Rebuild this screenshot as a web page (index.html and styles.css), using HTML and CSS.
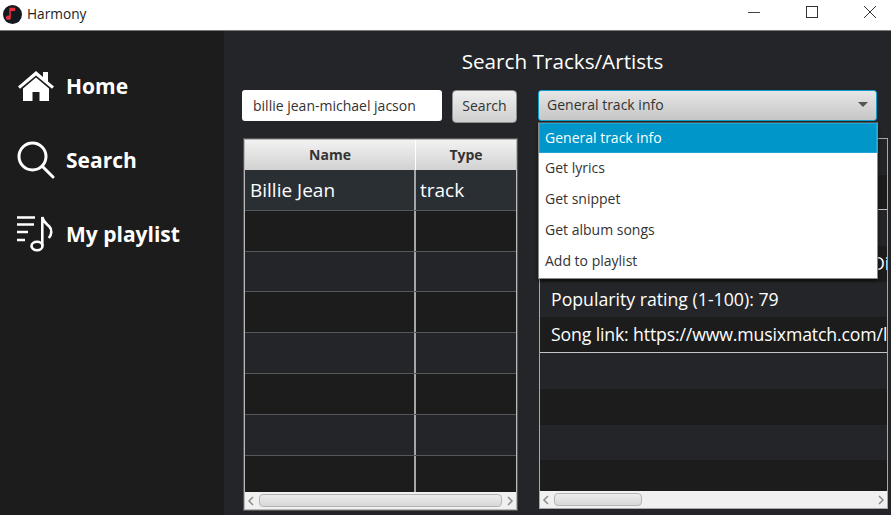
FILE: index.html
```html
<!DOCTYPE html>
<html lang="en">
<head>
  <meta charset="UTF-8">
  <meta name="viewport" content="width=device-width, initial-scale=1.0">
  <title>Harmony</title>
  <link rel="stylesheet" href="styles.css">
</head>
<body>

  <div class="titlebar">
    <svg class="app-icon" viewBox="0 0 20 20" width="19" height="19">
      <circle cx="10" cy="10" r="10" fill="#14181f"/>
      <path d="M8.200 4v9.200a2.600 2.200 0 1 1-1.600-1.800V3h6.200v3.200H8.200z" fill="#e8303f"/>
    </svg>
    <span class="app-name">Harmony</span>
    <div class="win-buttons">
      <svg viewBox="0 0 14 14" width="14" height="14"><path d="M1 7.500h12" stroke="#444" stroke-width="1" fill="none"/></svg>
      <svg viewBox="0 0 14 14" width="14" height="14"><rect x="1.500" y="1.500" width="11" height="11" stroke="#333" stroke-width="1" fill="none"/></svg>
      <svg viewBox="0 0 14 14" width="14" height="14"><path d="M1 1l12 12M13 1L1 13" stroke="#333" stroke-width="1" fill="none"/></svg>
    </div>
  </div>

  <div class="app">
    <div class="sidebar">
      <div class="nav-item">
        <svg viewBox="0 0 38 32" width="38" height="32">
          <path d="M1 16.500L19 1l7 6V2h5v9.500l6 5-2 2.300L19 5.500 3 18.800z" fill="#fff"/>
          <path d="M6 18.500L19 7.500l13 11V31H22.500v-9h-7v9H6z" fill="#fff"/>
        </svg>
        <span>Home</span>
      </div>
      <div class="nav-item">
        <svg viewBox="0 0 38 38" width="38" height="38">
          <circle cx="15.500" cy="15.500" r="13.500" fill="none" stroke="#fff" stroke-width="3"/>
          <path d="M25.500 25.500L36 36" fill="none" stroke="#fff" stroke-width="3" stroke-linecap="round"/>
        </svg>
        <span>Search</span>
      </div>
      <div class="nav-item">
        <svg viewBox="0 0 38 36" width="38" height="36" fill="none" stroke="#fff" stroke-width="2.600">
          <path d="M0 1.500h18M0 8.500h17M0 16h11M0 24h8"/>
          <ellipse cx="20" cy="30" rx="5.500" ry="4.200"/>
          <path d="M25.300 30V1c1 5 4 6.500 7 9.500 3 3 2.500 8-.5 11.500"/>
        </svg>
        <span>My playlist</span>
      </div>
    </div>

    <div class="main">
      <h1 class="page-title">Search Tracks/Artists</h1>

      <div class="columns">
        <div class="col-left">
          <div class="search-row">
            <div class="search-input">billie jean-michael jacson</div>
            <button class="btn">Search</button>
          </div>

          <div class="table">
            <div class="table-head">
              <div class="cell-name">Name</div>
              <div class="cell-type">Type</div>
            </div>
            <div class="table-body">
              <div class="row selected"><div class="cell-name">Billie Jean</div><div class="cell-type">track</div></div>
              <div class="row"><div class="cell-name"></div><div class="cell-type"></div></div>
              <div class="row alt"><div class="cell-name"></div><div class="cell-type"></div></div>
              <div class="row"><div class="cell-name"></div><div class="cell-type"></div></div>
              <div class="row alt"><div class="cell-name"></div><div class="cell-type"></div></div>
              <div class="row"><div class="cell-name"></div><div class="cell-type"></div></div>
              <div class="row alt"><div class="cell-name"></div><div class="cell-type"></div></div>
              <div class="row last"><div class="cell-name"></div><div class="cell-type"></div></div>
            </div>
            <div class="scrollbar">
              <svg class="arrow" viewBox="0 0 8 10" width="8" height="10"><path d="M6 1L2 5l4 4"/></svg>
              <div class="thumb thumb-wide"></div>
              <svg class="arrow" viewBox="0 0 8 10" width="8" height="10"><path d="M2 1l4 4-4 4"/></svg>
            </div>
          </div>
        </div>

        <div class="col-right">
          <div class="select">
            <span>General track info</span>
            <span class="caret"></span>
          </div>

          <div class="select-menu">
            <div class="option active">General track info</div>
            <div class="option">Get lyrics</div>
            <div class="option">Get snippet</div>
            <div class="option">Get album songs</div>
            <div class="option">Add to playlist</div>
          </div>

          <div class="list">
            <div class="list-body">
              <div class="list-row alt"></div>
              <div class="list-row divided"></div>
              <div class="list-row alt"></div>
              <div class="list-row clipped">Di</div>
              <div class="list-row alt">Popularity rating (1-100): 79</div>
              <div class="list-row divided link">Song link: https://www.musixmatch.com/lyrics</div>
              <div class="list-row alt"></div>
              <div class="list-row"></div>
              <div class="list-row alt"></div>
              <div class="list-row"></div>
            </div>
            <div class="scrollbar">
              <svg class="arrow" viewBox="0 0 8 10" width="8" height="10"><path d="M6 1L2 5l4 4"/></svg>
              <div class="thumb thumb-short"></div>
              <svg class="arrow arrow-end" viewBox="0 0 8 10" width="8" height="10"><path d="M2 1l4 4-4 4"/></svg>
            </div>
          </div>
        </div>
      </div>
    </div>
  </div>

</body>
</html>
```

FILE: styles.css
```css
html, body {
  margin: 0;
  height: 100%;
  overflow: hidden;
}
body {
  font-family: "Open Sans", "Noto Sans", sans-serif;
  background-color: #242528;
  display: flex;
  flex-direction: column;
}

/* window title */
.titlebar {
  height: 31px;
  flex: none;
  background-color: #fff;
  border-bottom: 1px solid #7a7a7a;
  box-sizing: border-box;
  display: flex;
  align-items: center;
  padding: 0 0 6px 3px;
}
.app-icon {
  margin: 4px 5px 0 0;
}
.app-name {
  margin-top: 3px;
  font-size: 13.700px;
  color: #222;
}
.win-buttons {
  margin-left: auto;
  display: flex;
  gap: 44px;
  padding-right: 14px;
}

.app {
  flex: 1;
  display: flex;
  min-height: 0;
}

/* left nav */
.sidebar {
  width: 224px;
  flex: none;
  background-color: #1c1c1c;
  padding-top: 36px;
  box-sizing: border-box;
}
.nav-item {
  height: 38px;
  margin-bottom: 36px;
  padding-left: 17px;
  display: flex;
  align-items: center;
  gap: 11px;
  color: #fff;
  font-size: 21px;
  font-weight: 700;
}

/* main area */
.main {
  flex: 1;
  min-width: 0;
}
.page-title {
  margin: 16px 0 0 0;
  height: 28px;
  line-height: 28px;
  font-size: 20.700px;
  font-weight: 400;
  color: #fff;
  text-align: center;
  padding-left: 10px;
}
.columns {
  display: flex;
  gap: 20px;
  padding: 15px 0 0 18px;
}
.col-left {
  width: 276px;
  flex: none;
}
.col-right {
  width: 350px;
  flex: none;
  position: relative;
}

.search-row {
  display: flex;
  justify-content: space-between;
  height: 32px;
}
.search-input {
  width: 200px;
  height: 31px;
  box-sizing: border-box;
  background-color: #fff;
  border-radius: 3px;
  padding-left: 11px;
  line-height: 32px;
  font-size: 14px;
  color: #333;
}
.btn {
  width: 65px;
  height: 33px;
  margin-right: 1px;
  padding: 0 0 2px 0;
  border: 1px solid #8f8f8f;
  border-radius: 4px;
  background: linear-gradient(#efefef, #cfcfcf);
  font-family: inherit;
  font-size: 14px;
  color: #333;
}

/* results table */
.table {
  margin-top: 16px;
  margin-left: 1px;
  height: 373px;
  box-sizing: border-box;
  border: 2px solid #b8b8b8;
  outline: 1px solid #555;
  outline-offset: -1px;
  display: flex;
  flex-direction: column;
  width: 275px;
}
.table-head {
  height: 30px;
  flex: none;
  display: flex;
  background: linear-gradient(#f2f2f2, #d2d2d2);
  font-size: 14px;
  font-weight: 700;
  color: #333;
  line-height: 30px;
  text-align: center;
}
.table-head .cell-name {
  border-right: 1px solid #fff;
}
.cell-name {
  width: 171px;
  flex: none;
  box-sizing: border-box;
}
.cell-type {
  flex: 1;
}
.table-body {
  flex: 1;
  min-height: 0;
}
.row {
  height: 40.800px;
  box-sizing: border-box;
  display: flex;
  border-bottom: 1px solid #55585a;
  background-color: #1c1c1c;
  color: #fff;
  font-size: 19px;
  line-height: 40px;
}
.row.alt {
  background-color: #242528;
}
.row.selected {
  background-color: #2a2f33;
}
.row.last {
  border-bottom: none;
  height: 36px;
}
.row .cell-name {
  padding-left: 5px;
  border-right: 2px solid #a6a6a6;
}
.row .cell-type {
  padding-left: 4px;
}

/* horizontal scrollbar, same on both panes */
.scrollbar {
  height: 17px;
  flex: none;
  display: flex;
  align-items: center;
  background-color: #f0f0f0;
  padding: 0 2px;
  gap: 4px;
}
.arrow {
  flex: none;
  fill: none;
  stroke: #8a8a8a;
  stroke-width: 1.500;
}
.arrow-end {
  margin-left: auto;
}
.thumb {
  height: 13px;
  box-sizing: border-box;
  border: 1px solid #b5b5b5;
  border-radius: 4px;
  background: linear-gradient(#ececec, #d8d8d8);
}
.thumb-wide {
  flex: 1;
}
.thumb-short {
  width: 88px;
}

/* combo box */
.select {
  height: 31px;
  width: 339px;
  box-sizing: border-box;
  border: 1px solid #0f9dce;
  border-radius: 3px;
  background: linear-gradient(#e6e6e6, #c6c6c6);
  display: flex;
  align-items: center;
  justify-content: space-between;
  padding: 0 8px 2px 8px;
  font-size: 14px;
  color: #333;
}
.caret {
  width: 0;
  height: 0;
  border-left: 5px solid transparent;
  border-right: 5px solid transparent;
  border-top: 5px solid #555;
}
.select-menu {
  position: absolute;
  top: 32px;
  left: 0;
  width: 340px;
  box-sizing: border-box;
  padding-bottom: 1px;
  background-color: #fff;
  border: 1px solid #8a8a8a;
  border-top-color: #555;
  z-index: 2;
  box-shadow: 0 2px 3px rgba(0, 0, 0, 0.5);
}
.option {
  height: 31px;
  line-height: 29px;
  padding-left: 6px;
  font-size: 14px;
  color: #333;
}
.option.active {
  height: 30px;
  line-height: 27px;
  background-color: #0096c9;
  color: #fff;
  border: 1px solid #1ba8d8;
  padding-left: 5px;
  box-sizing: border-box;
}

/* info list */
.list {
  margin: 17px 0 0 1px;
  height: 371px;
  box-sizing: border-box;
  border: 1px solid #a8a8a8;
  display: flex;
  flex-direction: column;
}
.list-body {
  flex: 1;
  min-height: 0;
  overflow: hidden;
}
.list-row {
  height: 35.700px;
  box-sizing: border-box;
  background-color: #1c1c1c;
  color: #fff;
  font-size: 17.700px;
  line-height: 35px;
  padding-left: 11px;
  white-space: nowrap;
  overflow: hidden;
}
.list-row.alt {
  background-color: #242528;
}
.list-row.divided {
  border-bottom: 1px solid #c4c4c4;
}
.list-row.link {
  letter-spacing: -0.150px;
}
.list-row.clipped {
  padding-left: 332px;
}
```
